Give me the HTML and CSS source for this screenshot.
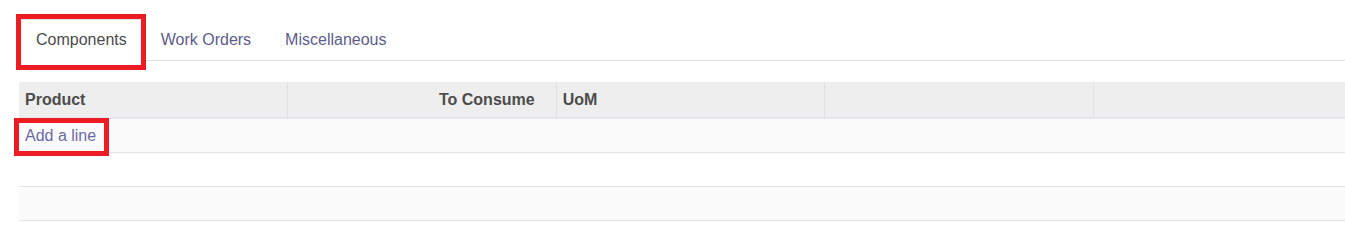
FILE: index.html
```html
<!DOCTYPE html>
<html lang="en">
  <head>
    <meta charset="UTF-8" />
    <meta name="viewport" content="width=device-width, initial-scale=1.0" />
    <title>Components</title>
    <link rel="stylesheet" href="styles.css">
  </head>
  <body>
    <div class="sheet">
      <ul class="tabs">
        <li class="tab active marked">Components</li>
        <li class="tab">Work Orders</li>
        <li class="tab">Miscellaneous</li>
      </ul>

      <table class="lines">
        <thead>
          <tr>
            <th>Product</th>
            <th class="num">To Consume</th>
            <th>UoM</th>
            <th></th>
            <th></th>
          </tr>
        </thead>
        <tbody>
          <tr>
            <td colspan="5"><a href="#" class="add marked">Add a line</a></td>
          </tr>
          <tr>
            <td colspan="5"></td>
          </tr>
          <tr>
            <td colspan="5"></td>
          </tr>
        </tbody>
      </table>
    </div>
  </body>
</html>
```

FILE: styles.css
```css
body {
  margin: 0;
  overflow: hidden;
  background: white;
  font-family: "Liberation Sans", Arial, sans-serif;
  font-size: 16px;
  color: #4c4c4c;
}

.sheet {
  padding: 19px 0 0 19px;
  width: 1343px;
}

.tabs {
  display: flex;
  margin: 0;
  padding: 0;
  list-style: none;
  border-bottom: 1px solid #dee2e6;
}

.tab {
  padding: 8px 16px;
  line-height: 24px;
  border: 1px solid transparent;
  margin-bottom: -1px;
  color: #5d5c8a;
}

.tab.active {
  color: #4c4c4c;
  background: white;
  border-color: #dee2e6 #dee2e6 white;
}

/* red annotation boxes */
.marked {
  position: relative;
}

.marked::after {
  content: "";
  position: absolute;
  border: 5px solid #ed1c24;
}

.tab.marked::after {
  top: -6px;
  left: -4px;
  right: -3px;
  bottom: -10px;
}

.add.marked::after {
  top: -9px;
  left: -11px;
  right: -13px;
  bottom: -12px;
}

.lines {
  margin-top: 21px;
  width: 1343px;
  border-collapse: collapse;
  table-layout: fixed;
}

.lines th {
  background: #eeeeee;
  text-align: left;
  font-weight: bold;
  padding: 5px 6px;
  line-height: 25px;
  border-left: 1px solid #dfe1e4;
  border-bottom: 2px solid #e3e6ea;
}

.lines th:first-child {
  border-left: none;
}

.lines th.num {
  text-align: right;
  padding-right: 21px;
}

.lines td {
  height: 33px;
  padding: 0 6px;
  line-height: 33px;
  border-bottom: 1px solid #e4e4e4;
}

.lines tbody tr:nth-child(odd) td {
  background: #fbfbfb;
}

.add {
  color: #6b6aa3;
  text-decoration: none;
}
```
